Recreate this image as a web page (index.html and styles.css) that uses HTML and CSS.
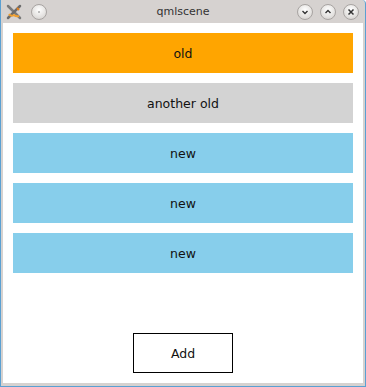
FILE: index.html
```html
<!DOCTYPE html>
<html lang="en">
<head>
  <meta charset="UTF-8" />
  <title>qmlscene</title>
  <link rel="stylesheet" href="styles.css">
</head>
<body>
  <div class="window">
    <div class="titlebar">
      <div class="tb-left">
        <svg class="app-icon" width="16" height="16" viewBox="0 0 16 16">
          <path d="M2 2 L14 14" stroke="#7a7a7a" stroke-width="2.5" stroke-linecap="round"/>
          <path d="M14 2 L2 14" stroke="#6c6c6c" stroke-width="2.5" stroke-linecap="round"/>
          <path d="M3 10 Q5 13 8 11 Q10 13 13 12" stroke="#f0a030" stroke-width="2" fill="none"/>
          <path d="M11 4 L13 6" stroke="#e08020" stroke-width="2"/>
        </svg>
        <span class="tb-btn"><svg width="14" height="14" viewBox="0 0 14 14"><circle cx="7" cy="7" r="0.8" fill="#777"/></svg></span>
      </div>
      <span class="title">qmlscene</span>
      <div class="tb-right">
        <span class="tb-btn"><svg width="14" height="14" viewBox="0 0 14 14"><path d="M4.5 6 L7 8.5 L9.5 6" stroke="#333" stroke-width="1.4" fill="none"/></svg></span>
        <span class="tb-btn"><svg width="14" height="14" viewBox="0 0 14 14"><path d="M4.5 8 L7 5.5 L9.5 8" stroke="#333" stroke-width="1.4" fill="none"/></svg></span>
        <span class="tb-btn"><svg width="14" height="14" viewBox="0 0 14 14"><path d="M4.5 4.5 L9.5 9.5 M9.5 4.5 L4.5 9.5" stroke="#333" stroke-width="1.5" fill="none"/></svg></span>
      </div>
    </div>

    <div class="content">
      <div class="item old">old</div>
      <div class="item another">another old</div>
      <div class="item new">new</div>
      <div class="item new">new</div>
      <div class="item new">new</div>
      <button class="add-btn">Add</button>
    </div>
  </div>
</body>
</html>
```

FILE: styles.css
```css
body {
  margin: 0;
  font-family: "DejaVu Sans", sans-serif;
  background: #fff;
}

.window {
  width: 366px;
  height: 387px;
  box-sizing: border-box;
  border: 1px solid #5ba0d2;
  border-top: none;
  border-top-right-radius: 4px;
  background: #d6d2d0;
  display: flex;
  flex-direction: column;
  padding: 0 1px 2px 1px;
}

.titlebar {
  height: 23px;
  display: flex;
  align-items: center;
  justify-content: space-between;
  position: relative;
  padding: 0 5px 0 4px;
}

.tb-left, .tb-right {
  display: flex;
  align-items: center;
  gap: 7px;
}

.tb-left {
  gap: 9px;
}

.tb-btn {
  width: 14px;
  height: 14px;
  border-radius: 50%;
  border: 1px solid #a8a4a2;
  background: radial-gradient(circle at 50% 35%, #ffffff, #e4e2e0 60%, #cfcbc9);
  display: flex;
  align-items: center;
  justify-content: center;
}

.title {
  position: absolute;
  left: 50%;
  transform: translateX(-50%);
  font-size: 11px;
  color: #333;
}

.content {
  flex: 1;
  background: #fff;
  margin: 0 1px 1px 1px;
  padding: 10px;
  display: flex;
  flex-direction: column;
  gap: 10px;
}

.item {
  height: 40px;
  display: flex;
  align-items: center;
  justify-content: center;
  font-size: 12.5px;
  color: #111;
}

.old {
  background: #ffa500;
}

.another {
  background: #d3d3d3;
}

.new {
  background: #87ceeb;
}

.add-btn {
  margin-top: auto;
  align-self: center;
  width: 100px;
  height: 40px;
  border: 1px solid #000;
  background: #fff;
  font-family: "DejaVu Sans", sans-serif;
  font-size: 12.5px;
  color: #111;
}
```
